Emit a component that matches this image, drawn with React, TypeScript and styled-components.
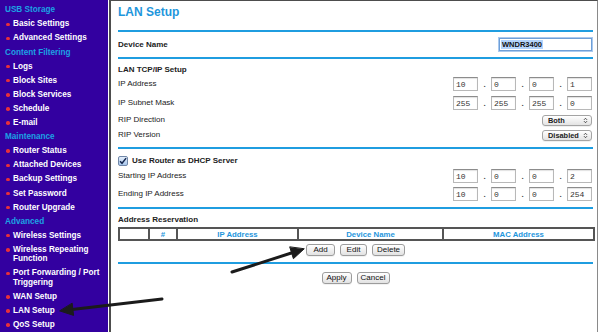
import React from 'react';
import styled, { createGlobalStyle } from 'styled-components';

const Global = createGlobalStyle`
  html, body { margin: 0; padding: 0; background: #fff; width: 600px; height: 332px; overflow: hidden; }
  #root { width: 600px; height: 332px; }
  * { box-sizing: border-box; }
`;

const Page = styled.div`
  position: relative;
  display: flex;
  width: 600px;
  height: 332px;
  overflow: hidden;
  font-family: "Liberation Sans", Arial, Helvetica, sans-serif;
`;

const Sidebar = styled.nav`
  width: 108px;
  flex: none;
  background: #3300a0;
  padding: 3px 4px 0 0;
  display: flex;
  flex-direction: column;
  font-size: 8.2px;
  font-weight: 700;
  line-height: 9.5px;
  overflow: hidden;
`;

const NavHeading = styled.div`
  padding: 2.3px 0 2.3px 5px;
  color: #1ca2e4;
`;

const NavItem = styled.div`
  display: flex;
  align-items: flex-start;
  gap: 3.5px;
  padding: 2.3px 0 2.3px 6px;
  color: #ffffff;
`;

const Bullet = styled.span`
  flex: none;
  width: 3.5px;
  height: 3.5px;
  border-radius: 50%;
  background: #e8303a;
  margin-top: 3.2px;
`;

const Main = styled.main`
  margin-left: 1px;
  width: 489px;
  flex: none;
  border-left: 2px solid #4d4d4d;
  border-top: 1px solid #4d4d4d;
  border-right: 1px solid #8a8a8a;
  padding: 0 4px 0 7px;
  display: flex;
  flex-direction: column;
  font-size: 8px;
  color: #222;
`;

const Title = styled.h1`
  margin: 0;
  height: 29px;
  padding-top: 4px;
  font-size: 12px;
  line-height: 14px;
  font-weight: 700;
  color: #1e96dc;
`;

const Divider = styled.div`
  height: 2px;
  flex: none;
  background: #1f9de0;
`;

const Section = styled.section<{ $pt?: number; $pb?: number }>`
  display: flex;
  flex-direction: column;
  padding-top: ${p => p.$pt ?? 0}px;
  padding-bottom: ${p => p.$pb ?? 0}px;
`;

const Row = styled.div<{ $h: number; $mt?: number }>`
  display: flex;
  align-items: center;
  justify-content: space-between;
  height: ${p => p.$h}px;
  margin-top: ${p => p.$mt ?? 0}px;
  flex: none;
`;

const Label = styled.span<{ $bold?: boolean }>`
  font-weight: ${p => (p.$bold ? 700 : 400)};
  line-height: 10px;
  white-space: nowrap;
`;

const DeviceInput = styled.div`
  width: 93px;
  height: 13px;
  margin-right: 1px;
  border: 1px solid #6e9fd8;
  box-shadow: 0 0 0 1px #a9c9ef;
  background: #fff;
  display: flex;
  align-items: center;
  padding-left: 1px;
  font-size: 7.5px;
  font-weight: 700;
  color: #111;
`;

const Selected = styled.span`
  background: #b4d4fb;
  padding: 0 1px;
  line-height: 9px;
`;

const IpGroup = styled.div`
  display: flex;
  align-items: center;
  margin-right: 1px;
`;

const Octet = styled.input`
  width: 25px;
  height: 14px;
  padding: 0 0 0 2px;
  border: 1px solid #b8b8b8;
  border-top-color: #8c8c8c;
  box-shadow: inset 0 1px 1px rgba(0, 0, 0, 0.12);
  font-family: "Liberation Mono", "DejaVu Sans Mono", monospace;
  font-size: 8px;
  color: #333;
  background: #fff;
  outline: none;
`;

const Dot = styled.span`
  width: 13px;
  text-align: center;
  font-size: 8px;
  font-weight: 700;
  color: #444;
`;

const SelectWrap = styled.div`
  position: relative;
  width: 50px;
  height: 11px;
  margin-right: 1px;
`;

const Select = styled.select`
  appearance: none;
  -webkit-appearance: none;
  width: 50px;
  height: 11px;
  padding: 0 0 0 5px;
  border: 1px solid #a4a4a4;
  border-radius: 3px;
  background: linear-gradient(#ffffff, #e3e3e3);
  box-shadow: 0 1px 0 rgba(0, 0, 0, 0.06);
  font-family: "Liberation Sans", Arial, sans-serif;
  font-size: 7.4px;
  font-weight: 700;
  line-height: 9px;
  color: #222;
  outline: none;
`;

const SelectArrows = styled.svg`
  position: absolute;
  right: 4px;
  top: 2px;
  pointer-events: none;
`;

const CheckLabel = styled.label`
  display: flex;
  align-items: center;
  gap: 4px;
  font-weight: 700;
  line-height: 10px;
`;

const CheckBox = styled.span`
  width: 10px;
  height: 10px;
  border: 1px solid #7087a8;
  border-radius: 2px;
  background: linear-gradient(#e4eefa, #a8c6ec);
  display: flex;
  align-items: center;
  justify-content: center;
`;

const Table = styled.table`
  width: 475px;
  height: 14px;
  border-collapse: collapse;
  border: 2px solid #555;
  table-layout: fixed;
`;

const Th = styled.th<{ $w: number }>`
  width: ${p => p.$w}px;
  border: 1px solid #555;
  border-left-width: 2px;
  padding: 0;
  height: 10px;
  font-size: 7.8px;
  line-height: 9px;
  font-weight: 700;
  color: #1f96dc;
  text-align: center;
`;

const ButtonRow = styled.div<{ $mt: number }>`
  display: flex;
  justify-content: center;
  gap: 5px;
  margin-top: ${p => p.$mt}px;
  height: 12px;
  flex: none;
`;

const Button = styled.button<{ $w: number }>`
  width: ${p => p.$w}px;
  height: 12px;
  padding: 0;
  border: 1px solid #9c9c9c;
  border-radius: 3px;
  background: linear-gradient(#ffffff, #e2e2e2);
  box-shadow: 0 1px 0 rgba(0, 0, 0, 0.05);
  font-family: "Liberation Sans", Arial, sans-serif;
  font-size: 8px;
  line-height: 10px;
  color: #111;
`;

const Arrows = styled.svg`
  position: absolute;
  left: 0;
  top: 0;
  pointer-events: none;
`;

type NavEntry = { kind: 'h' | 'i'; text: string };

const nav: NavEntry[] = [
  { kind: 'h', text: 'USB Storage' },
  { kind: 'i', text: 'Basic Settings' },
  { kind: 'i', text: 'Advanced Settings' },
  { kind: 'h', text: 'Content Filtering' },
  { kind: 'i', text: 'Logs' },
  { kind: 'i', text: 'Block Sites' },
  { kind: 'i', text: 'Block Services' },
  { kind: 'i', text: 'Schedule' },
  { kind: 'i', text: 'E-mail' },
  { kind: 'h', text: 'Maintenance' },
  { kind: 'i', text: 'Router Status' },
  { kind: 'i', text: 'Attached Devices' },
  { kind: 'i', text: 'Backup Settings' },
  { kind: 'i', text: 'Set Password' },
  { kind: 'i', text: 'Router Upgrade' },
  { kind: 'h', text: 'Advanced' },
  { kind: 'i', text: 'Wireless Settings' },
  { kind: 'i', text: 'Wireless Repeating Function' },
  { kind: 'i', text: 'Port Forwarding / Port Triggering' },
  { kind: 'i', text: 'WAN Setup' },
  { kind: 'i', text: 'LAN Setup' },
  { kind: 'i', text: 'QoS Setup' },
];

const IpField = ({ parts }: { parts: string[] }) => (
  <IpGroup>
    {parts.map((p, i) => (
      <React.Fragment key={i}>
        {i > 0 && <Dot>.</Dot>}
        <Octet value={p} readOnly />
      </React.Fragment>
    ))}
  </IpGroup>
);

const PopUp = ({ value }: { value: string }) => (
  <SelectWrap>
    <Select value={value} onChange={() => {}}>
      <option>{value}</option>
    </Select>
    <SelectArrows width="5" height="7" viewBox="0 0 5 7">
      <path d="M1 2.8 L2.5 1.3 L4 2.8 M1 4.2 L2.5 5.7 L4 4.2" fill="none" stroke="#333" strokeWidth="0.9" />
    </SelectArrows>
  </SelectWrap>
);

export default function App() {
  return (
    <>
      <Global />
      <Page>
        <Sidebar>
          {nav.map((e, i) =>
            e.kind === 'h' ? (
              <NavHeading key={i}>{e.text}</NavHeading>
            ) : (
              <NavItem key={i}>
                <Bullet />
                <span>{e.text}</span>
              </NavItem>
            )
          )}
        </Sidebar>
        <Main>
          <Title>LAN Setup</Title>
          <Divider />
          <Row $h={25}>
            <Label $bold>Device Name</Label>
            <DeviceInput>
              <Selected>WNDR3400</Selected>
            </DeviceInput>
          </Row>
          <Divider />
          <Section $pt={4} $pb={6}>
            <Row $h={14}>
              <Label $bold>LAN TCP/IP Setup</Label>
            </Row>
            <Row $h={14}>
              <Label>IP Address</Label>
              <IpField parts={['10', '0', '0', '1']} />
            </Row>
            <Row $h={14} $mt={5}>
              <Label>IP Subnet Mask</Label>
              <IpField parts={['255', '255', '255', '0']} />
            </Row>
            <Row $h={12} $mt={4}>
              <Label>RIP Direction</Label>
              <PopUp value="Both" />
            </Row>
            <Row $h={12} $mt={3}>
              <Label>RIP Version</Label>
              <PopUp value="Disabled" />
            </Row>
          </Section>
          <Divider />
          <Section $pt={6} $pb={6}>
            <Row $h={12}>
              <CheckLabel>
                <CheckBox>
                  <svg width="9" height="8" viewBox="0 0 9 8">
                    <path d="M1.2 4.2 L3.4 6.6 L8 0.8" fill="none" stroke="#13254d" strokeWidth="1.6" />
                  </svg>
                </CheckBox>
                Use Router as DHCP Server
              </CheckLabel>
            </Row>
            <Row $h={14} $mt={2}>
              <Label>Starting IP Address</Label>
              <IpField parts={['10', '0', '0', '2']} />
            </Row>
            <Row $h={14} $mt={4}>
              <Label>Ending IP Address</Label>
              <IpField parts={['10', '0', '0', '254']} />
            </Row>
          </Section>
          <Divider />
          <Section $pt={5} $pb={6}>
            <Row $h={12}>
              <Label $bold>Address Reservation</Label>
            </Row>
            <Row $h={14} $mt={1}>
              <Table>
                <thead>
                  <tr>
                    <Th $w={30}></Th>
                    <Th $w={28}>#</Th>
                    <Th $w={121}>IP Address</Th>
                    <Th $w={145}>Device Name</Th>
                    <Th $w={151}>MAC Address</Th>
                  </tr>
                </thead>
              </Table>
            </Row>
            <ButtonRow $mt={3}>
              <Button $w={29}>Add</Button>
              <Button $w={27}>Edit</Button>
              <Button $w={33}>Delete</Button>
            </ButtonRow>
          </Section>
          <Divider />
          <ButtonRow $mt={8}>
            <Button $w={30}>Apply</Button>
            <Button $w={33}>Cancel</Button>
          </ButtonRow>
        </Main>
        <Arrows width="600" height="332" viewBox="0 0 600 332">
          <g fill="#1b1b1b" stroke="#1b1b1b" strokeLinecap="round">
            <path d="M232 272 L293 252.5" strokeWidth="3" />
            <path d="M304 249 L293.4 258.7 L289.8 247.2 Z" strokeWidth="1" strokeLinejoin="round" />
            <path d="M162 299 L72 309.5" strokeWidth="3" />
            <path d="M60 311 L73.6 315.4 L72.2 303.5 Z" strokeWidth="1" strokeLinejoin="round" />
          </g>
        </Arrows>
      </Page>
    </>
  );
}
